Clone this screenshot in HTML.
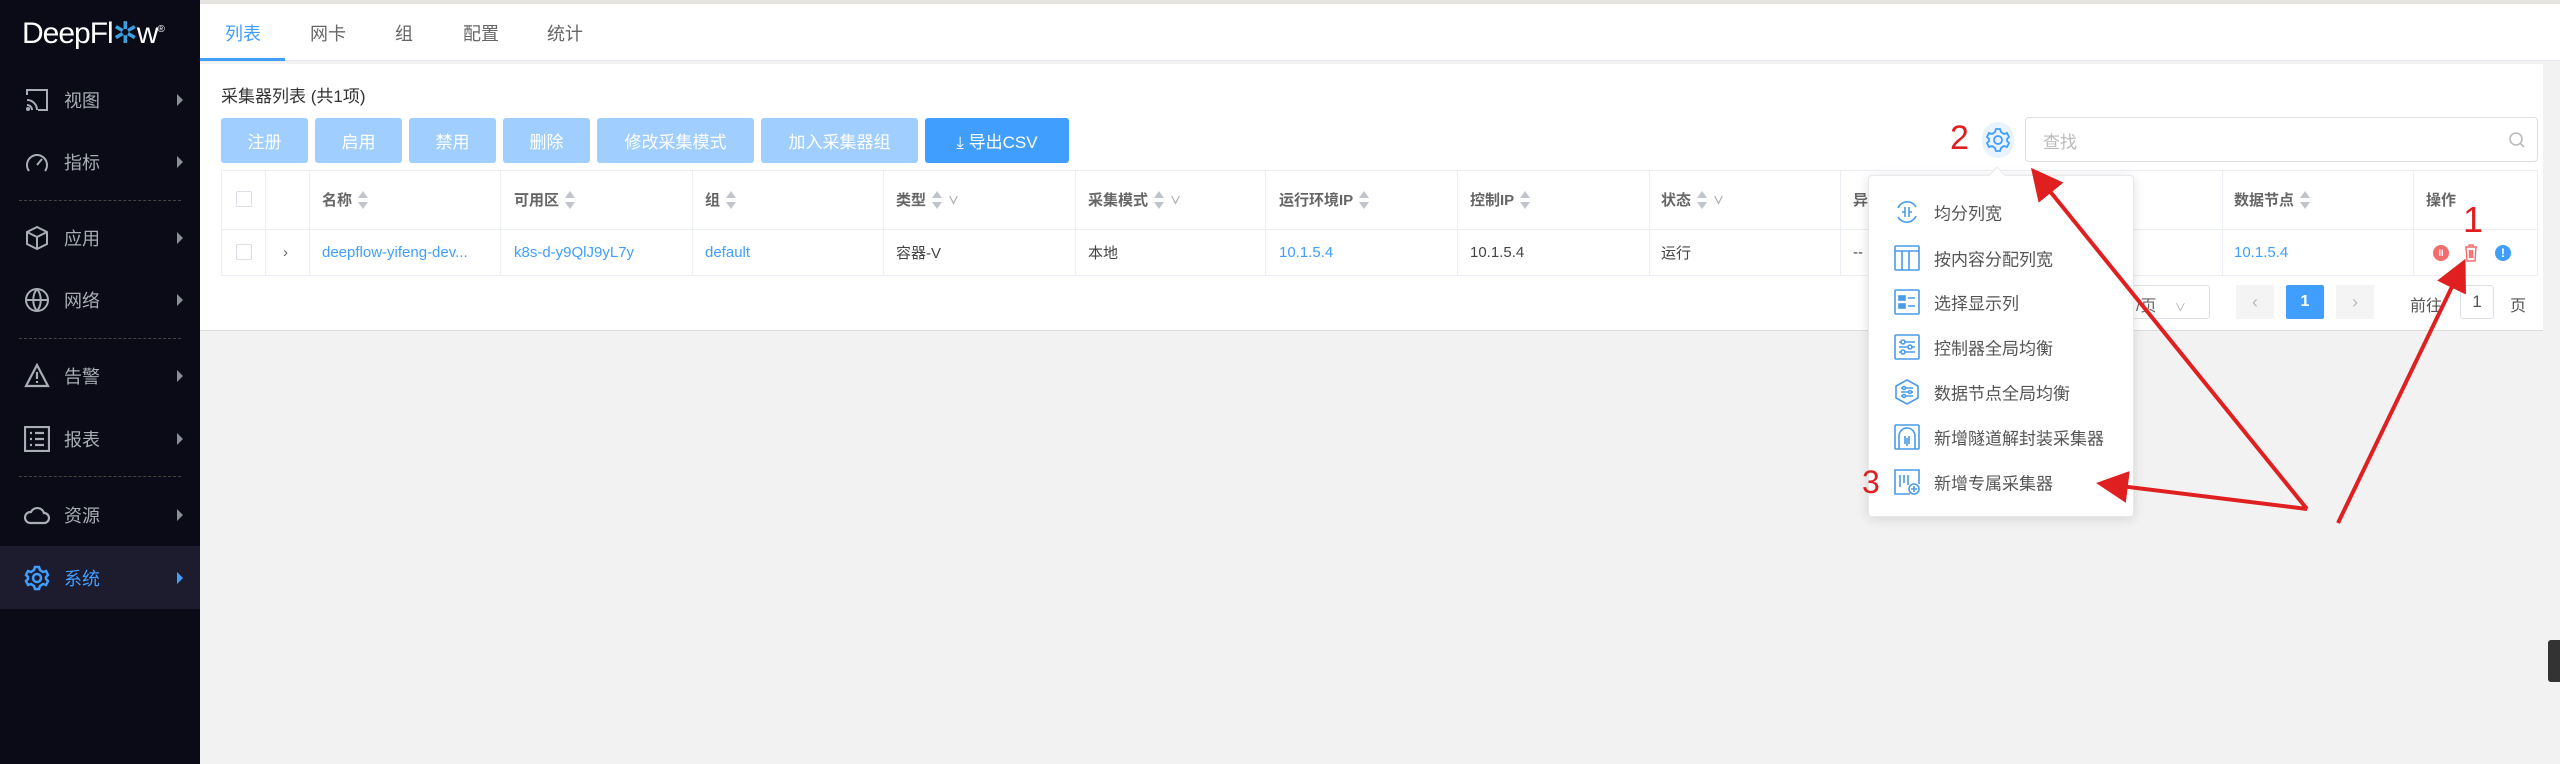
<!DOCTYPE html>
<html><head><meta charset="utf-8"><style>
*{margin:0;padding:0;box-sizing:border-box}
body{width:2560px;height:764px;overflow:hidden;background:#f2f2f2;font-family:"Liberation Sans","Noto Sans CJK SC",sans-serif;position:relative;color:#333}
.a{position:absolute}
.sb{left:0;top:0;width:200px;height:764px;background:#0b0b17}
.nav{position:absolute;left:0;width:200px;height:60px;color:#a9adb4;font-size:18px}
.nav span{position:absolute;left:64px;top:50%;transform:translateY(-50%)}
.nav i{position:absolute;left:177px;top:50%;margin-top:-6px;border-left:6px solid #8a8f96;border-top:6px solid transparent;border-bottom:6px solid transparent}
.nav svg{position:absolute;left:24px;top:50%;margin-top:-13px}
.div{position:absolute;left:19px;width:162px;border-top:1px dashed #444}
.btn{position:absolute;top:118px;height:45px;background:#a0cfff;color:#fff;font-size:17px;border-radius:3px;display:flex;align-items:center;justify-content:center}
.th,.td{position:absolute;font-size:15px;display:flex;align-items:center}
.th{top:170px;height:59px;color:#666;font-weight:bold}
.td{top:229px;height:47px;color:#444}
.bl{color:#409eff}
.vl{position:absolute;top:170px;height:106px;border-left:1px solid #ebeef5}
.sort{display:inline-block;margin-left:6px;width:10px;height:18px;position:relative;vertical-align:middle}
.sort:before{content:"";position:absolute;top:0;left:0;border:5px solid transparent;border-bottom:7px solid #c0c4cc;border-top:0}
.sort:after{content:"";position:absolute;bottom:0;left:0;border:5px solid transparent;border-top:7px solid #c0c4cc;border-bottom:0}
.dd{font-size:11px;color:#aaa;margin-left:6px}
.mi{position:absolute;left:1934px;font-size:17px;color:#555;transform:translateY(-50%)}
.ic{position:absolute;left:1894px;width:26px;height:26px;transform:translateY(-50%)}
</style></head><body>
<div class="a" style="left:0;top:0;width:2560px;height:4px;background:#e6e4df"></div>
<div class="a sb"></div>
<div class="a" style="left:22px;top:16px;color:#fff;font-size:30px;letter-spacing:-1px">DeepFl<span style="color:#3aa0e0">✲</span>w<sup style="font-size:10px">®</sup></div>
<div class="nav" style="top:70px"><svg width="26" height="26" viewBox="0 0 26 26" fill="none" stroke="#a9adb4" stroke-width="2"><path d="M3 8V3h20v20h-9M3 13a10 10 0 0 1 10 10M3 18a5 5 0 0 1 5 5"/><circle cx="4" cy="22" r="1"/></svg><span>视图</span><i></i></div>
<div class="nav" style="top:132px"><svg width="26" height="26" viewBox="0 0 26 26" fill="none" stroke="#a9adb4" stroke-width="2"><path d="M5 22A10 10 0 1 1 21 22M13 16l5-6"/></svg><span>指标</span><i></i></div>
<div class="div" style="top:200px"></div>
<div class="nav" style="top:208px"><svg width="26" height="26" viewBox="0 0 26 26" fill="none" stroke="#a9adb4" stroke-width="2"><path d="M13 2l10 5v12l-10 5-10-5V7zM3 7l10 5 10-5M13 12v12"/></svg><span>应用</span><i></i></div>
<div class="nav" style="top:270px"><svg width="26" height="26" viewBox="0 0 26 26" fill="none" stroke="#a9adb4" stroke-width="2"><circle cx="13" cy="13" r="11"/><path d="M2 13h22M13 2c-5 6-5 16 0 22M13 2c5 6 5 16 0 22"/></svg><span>网络</span><i></i></div>
<div class="div" style="top:338px"></div>
<div class="nav" style="top:346px"><svg width="26" height="26" viewBox="0 0 26 26" fill="none" stroke="#a9adb4" stroke-width="2.2"><path d="M13 2L24 23H2zM13 9v7M13 18v2"/></svg><span>告警</span><i></i></div>
<div class="nav" style="top:409px"><svg width="26" height="26" viewBox="0 0 26 26" fill="none" stroke="#a9adb4" stroke-width="2.2"><rect x="1" y="1" width="24" height="24"/><path d="M6 7h2M11 7h9M6 13h2M11 13h9M6 19h2M11 19h9"/></svg><span>报表</span><i></i></div>
<div class="div" style="top:476px"></div>
<div class="nav" style="top:485px"><svg width="26" height="26" viewBox="0 0 26 26" fill="none" stroke="#a9adb4" stroke-width="2.2"><path d="M6 21h14a5 5 0 0 0 0-10 7 7 0 0 0-13-1A5.5 5.5 0 0 0 6 21z"/></svg><span>资源</span><i></i></div>
<div class="nav" style="top:546px;height:63px;background:#1c1c2e;color:#409eff"><svg width="26" height="26" viewBox="0 0 26 26" fill="none" stroke="#409eff" stroke-width="2.5"><circle cx="13" cy="13" r="4"/><path d="M11 2h4l1 3 3 2 3-1 2 4-2 2v2l2 2-2 4-3-1-3 2-1 3h-4l-1-3-3-2-3 1-2-4 2-2v-2L2 10l2-4 3 1 3-2z"/></svg><span>系统</span><i style="border-left-color:#409eff"></i></div>

<div class="a" style="left:200px;top:4px;width:2360px;height:57px;background:#fff;border-bottom:1px solid #e4e7ed"></div>
<div class="a" style="left:200px;top:58px;width:85px;height:3px;background:#409eff"></div>
<div class="a" style="top:20px;left:225px;font-size:18px;color:#409eff">列表</div>
<div class="a" style="top:20px;left:310px;font-size:18px;color:#666">网卡</div>
<div class="a" style="top:20px;left:395px;font-size:18px;color:#666">组</div>
<div class="a" style="top:20px;left:463px;font-size:18px;color:#666">配置</div>
<div class="a" style="top:20px;left:547px;font-size:18px;color:#666">统计</div>

<div class="a" style="left:200px;top:64px;width:2343px;height:267px;background:#fff;border-bottom:1px solid #ddd"></div>
<div class="a" style="left:221px;top:82px;font-size:17px;color:#333">采集器列表 (共1项)</div>
<div class="btn" style="left:221px;width:87px">注册</div>
<div class="btn" style="left:315px;width:87px">启用</div>
<div class="btn" style="left:409px;width:87px">禁用</div>
<div class="btn" style="left:503px;width:87px">删除</div>
<div class="btn" style="left:597px;width:157px">修改采集模式</div>
<div class="btn" style="left:761px;width:157px">加入采集器组</div>
<div class="btn" style="left:925px;width:144px;background:#409eff">⤓ 导出CSV</div>

<div class="a" style="left:1982px;top:122px;width:32px;height:36px;border-radius:16px;background:#e8f3ff"></div>
<svg class="a" style="left:1985px;top:127px" width="26" height="26" viewBox="0 0 26 26" fill="none" stroke="#409eff" stroke-width="1.8"><circle cx="13" cy="13" r="4"/><path d="M11 2h4l1 3 3 2 3-1 2 4-2 2v2l2 2-2 4-3-1-3 2-1 3h-4l-1-3-3-2-3 1-2-4 2-2v-2L2 10l2-4 3 1 3-2z"/></svg>
<div class="a" style="left:1950px;top:118px;font-size:34px;color:#e02020;line-height:40px">2</div>
<div class="a" style="left:2025px;top:117px;width:513px;height:45px;border:1px solid #dcdfe6;border-radius:4px"></div>
<div class="a" style="left:2043px;top:128px;font-size:17px;color:#bbb">查找</div>
<svg class="a" style="left:2508px;top:131px" width="18" height="18" viewBox="0 0 18 18" fill="none" stroke="#bbb" stroke-width="1.6"><circle cx="8" cy="8" r="6"/><path d="M12.5 12.5L16 16"/></svg>

<div class="a" style="left:221px;top:170px;width:2317px;height:106px;border:1px solid #ebeef5"></div>
<div class="a" style="left:221px;top:229px;width:2317px;border-top:1px solid #ebeef5"></div>
<div class="vl" style="left:265px"></div><div class="vl" style="left:309px"></div><div class="vl" style="left:500px"></div><div class="vl" style="left:692px"></div><div class="vl" style="left:883px"></div><div class="vl" style="left:1075px"></div><div class="vl" style="left:1265px"></div><div class="vl" style="left:1457px"></div><div class="vl" style="left:1649px"></div><div class="vl" style="left:1840px"></div><div class="vl" style="left:2222px"></div><div class="vl" style="left:2413px"></div>
<div class="a" style="left:236px;top:191px;width:16px;height:16px;border:1px solid #dcdfe6;border-radius:2px"></div>
<div class="a" style="left:236px;top:244px;width:16px;height:16px;border:1px solid #dcdfe6;border-radius:2px"></div>
<div class="td" style="left:283px;color:#666">›</div>
<div class="th" style="left:322px">名称<b class="sort"></b></div>
<div class="th" style="left:514px">可用区<b class="sort"></b></div>
<div class="th" style="left:705px">组<b class="sort"></b></div>
<div class="th" style="left:896px">类型<b class="sort"></b><span class="dd">∨</span></div>
<div class="th" style="left:1088px">采集模式<b class="sort"></b><span class="dd">∨</span></div>
<div class="th" style="left:1279px">运行环境IP<b class="sort"></b></div>
<div class="th" style="left:1470px">控制IP<b class="sort"></b></div>
<div class="th" style="left:1661px">状态<b class="sort"></b><span class="dd">∨</span></div>
<div class="th" style="left:1853px">异</div>
<div class="th" style="left:2234px">数据节点<b class="sort"></b></div>
<div class="th" style="left:2426px">操作</div>
<div class="td bl" style="left:322px">deepflow-yifeng-dev...</div>
<div class="td bl" style="left:514px">k8s-d-y9QlJ9yL7y</div>
<div class="td bl" style="left:705px">default</div>
<div class="td" style="left:896px">容器-V</div>
<div class="td" style="left:1088px">本地</div>
<div class="td bl" style="left:1279px">10.1.5.4</div>
<div class="td" style="left:1470px">10.1.5.4</div>
<div class="td" style="left:1661px">运行</div>
<div class="td" style="left:1853px">--</div>
<div class="td bl" style="left:2234px">10.1.5.4</div>
<div class="a" style="left:2433px;top:245px;width:16px;height:16px;border-radius:8px;background:#f56c6c;color:#fff;font-size:9px;text-align:center;line-height:16px;font-weight:bold">II</div>
<svg class="a" style="left:2464px;top:244px" width="14" height="18" viewBox="0 0 14 18" fill="none" stroke="#f56c6c" stroke-width="1.4"><path d="M1 3h12M5 3V1h4v2M2 3l1 14h8l1-14M5.5 6v8M7 6v8M8.5 6v8"/></svg>
<div class="a" style="left:2495px;top:245px;width:16px;height:16px;border-radius:8px;background:#409eff;color:#fff;font-size:12px;text-align:center;line-height:16px;font-weight:bold">!</div>

<div class="a" style="left:2130px;top:285px;width:80px;height:34px;border:1px solid #dcdfe6;border-radius:3px"></div>
<div class="a" style="left:2136px;top:292px;font-size:16px;color:#666">/页 <span style="color:#aaa;font-size:11px;margin-left:14px">∨</span></div>
<div class="a" style="left:2236px;top:285px;width:38px;height:34px;background:#f4f4f5;color:#bbb;text-align:center;line-height:34px;font-size:18px">‹</div>
<div class="a" style="left:2286px;top:285px;width:38px;height:34px;background:#409eff;color:#fff;text-align:center;line-height:34px;font-size:16px;font-weight:bold;border-radius:2px">1</div>
<div class="a" style="left:2336px;top:285px;width:38px;height:34px;background:#f4f4f5;color:#bbb;text-align:center;line-height:34px;font-size:18px">›</div>
<div class="a" style="left:2410px;top:292px;font-size:16px;color:#555">前往</div>
<div class="a" style="left:2460px;top:285px;width:34px;height:34px;border:1px solid #dcdfe6;border-radius:3px;text-align:center;line-height:32px;font-size:17px;color:#555">1</div>
<div class="a" style="left:2510px;top:292px;font-size:16px;color:#555">页</div>

<div class="a" style="left:1868px;top:175px;width:266px;height:342px;background:#fff;border:1px solid #e8e8e8;border-radius:4px;box-shadow:0 2px 12px rgba(0,0,0,.12)"></div>
<div class="a" style="left:1991px;top:169px;width:12px;height:12px;background:#fff;transform:rotate(45deg);border-left:1px solid #e8e8e8;border-top:1px solid #e8e8e8"></div>
<svg class="ic" style="top:212px" viewBox="0 0 26 26" fill="none" stroke="#4a9be8" stroke-width="1.6"><path d="M4 9a10 10 0 0 1 18-1M22 17a10 10 0 0 1-18 1"/><path d="M11 8v10M15 8v10M8 13h3M15 13h3"/></svg>
<div class="mi" style="top:212px">均分列宽</div>
<svg class="ic" style="top:258px" viewBox="0 0 26 26" fill="none" stroke="#4a9be8" stroke-width="1.6"><rect x="1" y="1" width="24" height="24" rx="1"/><path d="M1 6h24M8 6v19M15 6v19"/></svg>
<div class="mi" style="top:258px">按内容分配列宽</div>
<svg class="ic" style="top:302px" viewBox="0 0 26 26" fill="none" stroke="#4a9be8" stroke-width="1.6"><rect x="1" y="1" width="24" height="24" rx="1"/><rect x="5" y="7" width="6" height="4" fill="#4a9be8"/><rect x="5" y="15" width="6" height="4" fill="#4a9be8"/><path d="M14 9h7M14 17h7"/></svg>
<div class="mi" style="top:302px">选择显示列</div>
<svg class="ic" style="top:347px" viewBox="0 0 26 26" fill="none" stroke="#4a9be8" stroke-width="1.6"><rect x="1" y="1" width="24" height="24" rx="1"/><path d="M5 8h16M5 13h16M5 18h16"/><circle cx="9" cy="8" r="2" fill="#fff"/><circle cx="16" cy="13" r="2" fill="#fff"/><circle cx="9" cy="18" r="2" fill="#fff"/></svg>
<div class="mi" style="top:347px">控制器全局均衡</div>
<svg class="ic" style="top:392px" viewBox="0 0 26 26" fill="none" stroke="#4a9be8" stroke-width="1.6"><path d="M13 1l11 6v12l-11 6-11-6V7z"/><path d="M7 9h12M7 13h12M7 17h12"/><circle cx="10" cy="9" r="1.5" fill="#fff"/><circle cx="16" cy="13" r="1.5" fill="#fff"/><circle cx="10" cy="17" r="1.5" fill="#fff"/></svg>
<div class="mi" style="top:392px">数据节点全局均衡</div>
<svg class="ic" style="top:437px" viewBox="0 0 26 26" fill="none" stroke="#4a9be8" stroke-width="1.6"><rect x="1" y="1" width="24" height="24" rx="1"/><path d="M5 25V12a8 8 0 0 1 16 0v13M11 12v8M15 12v8M13 14v8"/></svg>
<div class="mi" style="top:437px">新增隧道解封装采集器</div>
<svg class="ic" style="top:482px" viewBox="0 0 26 26" fill="none" stroke="#4a9be8" stroke-width="1.6"><path d="M16 25H1V1h24v14"/><path d="M6 6v12M10 6v8M14 6v10"/><circle cx="20" cy="20" r="5" fill="#fff"/><path d="M20 17v6M17 20h6"/></svg>
<div class="mi" style="top:482px">新增专属采集器</div>
<div class="a" style="left:1862px;top:462px;font-size:32px;color:#e02020;line-height:40px">3</div>
<div class="a" style="left:2463px;top:200px;font-size:36px;color:#e02020;line-height:40px">1</div>

<svg class="a" style="left:0;top:0" width="2560" height="764" viewBox="0 0 2560 764">
<defs><marker id="m" markerWidth="8" markerHeight="8" refX="6" refY="4" orient="auto" markerUnits="strokeWidth"><path d="M0 0L8 4L0 8z" fill="#e02020"/></marker></defs>
<g stroke="#e02020" stroke-width="4" fill="none">
<path d="M2307 509L2036 174" marker-end="url(#m)"/>
<path d="M2307 509L2104 484" marker-end="url(#m)"/>
<path d="M2338 523L2462 266" marker-end="url(#m)"/>
</g></svg>
<div class="a" style="left:2548px;top:640px;width:12px;height:42px;background:#333;border-radius:3px 0 0 3px"></div>
</body></html>
